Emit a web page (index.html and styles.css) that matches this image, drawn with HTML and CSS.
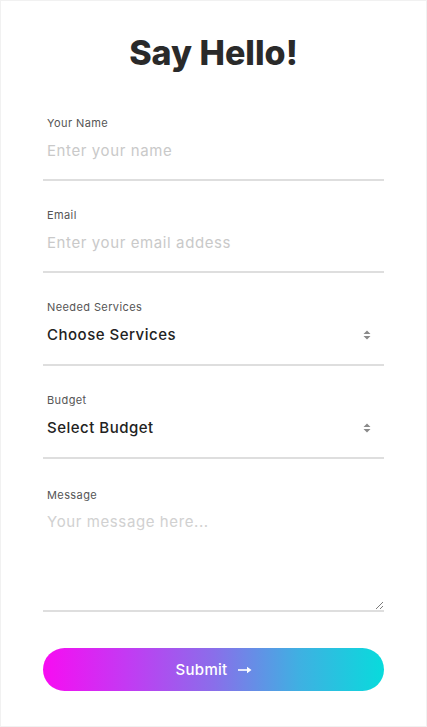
FILE: index.html
```html
<!DOCTYPE html>
<html lang="en">
<head>
<meta charset="utf-8">
<title>Say Hello!</title>
<link rel="stylesheet" href="styles.css">
</head>
<body>
<main class="page">
  <h1 class="title">Say Hello!</h1>
  <form class="form">
    <div class="field">
      <label class="label" for="name">Your Name</label>
      <input class="control" id="name" type="text" placeholder="Enter your name">
    </div>
    <div class="field">
      <label class="label" for="email">Email</label>
      <input class="control" id="email" type="email" placeholder="Enter your email addess">
    </div>
    <div class="field">
      <label class="label" for="services">Needed Services</label>
      <div class="select-wrap">
        <select class="control select" id="services">
          <option>Choose Services</option>
        </select>
        <svg class="arrows" width="8" height="10" viewBox="0 0 8 10"><path d="M4 0.5 L7.5 4 H0.5 Z M4 9.5 L7.5 6 H0.5 Z" fill="#8a8a8a"/></svg>
      </div>
    </div>
    <div class="field">
      <label class="label" for="budget">Budget</label>
      <div class="select-wrap">
        <select class="control select" id="budget">
          <option>Select Budget</option>
        </select>
        <svg class="arrows" width="8" height="10" viewBox="0 0 8 10"><path d="M4 0.5 L7.5 4 H0.5 Z M4 9.5 L7.5 6 H0.5 Z" fill="#8a8a8a"/></svg>
      </div>
    </div>
    <div class="field field-message">
      <label class="label" for="message">Message</label>
      <textarea class="control textarea" id="message" placeholder="Your message here..."></textarea>
    </div>
    <button class="submit" type="button">Submit <svg class="arrow" width="14" height="8" viewBox="0 0 14 8"><path d="M0 4 H12" stroke="#fff" stroke-width="1.6"/><path d="M9 0.8 L13.5 4 L9 7.2 Z" fill="#fff"/></svg></button>
  </form>
</main>
</body>
</html>
```
FILE: styles.css
```css
* { box-sizing: border-box; }
html, body { margin: 0; padding: 0; background: #fff; }
body { font-family: Inter, "Noto Sans", sans-serif; }
.page {
  min-height: 727px;
  border: 1px solid #f1f1f1;
  padding: 32px 42px 0;
}
.title {
  margin: 0;
  text-align: center;
  font-size: 34px;
  line-height: 40px;
  font-weight: 800;
  color: #2a2a2a;
  letter-spacing: 0;
}
.form {
  margin-top: 42px;
  display: flex;
  flex-direction: column;
  gap: 26px;
}
.field {
  display: flex;
  flex-direction: column;
  border-bottom: 2px solid #dedede;
}
.field-message { margin-top: 2px; }
.label {
  display: block;
  padding-left: 4px;
  font-size: 11px;
  line-height: 16px;
  color: #555;
  letter-spacing: 0.4px;
}
.control {
  display: block;
  width: 100%;
  border: 0;
  outline: 0;
  background: transparent;
  font-family: inherit;
  font-size: 15px;
  line-height: 22px;
  height: 48px;
  padding: 8px 4px 18px;
  margin: 0;
  color: #222;
  letter-spacing: 0.6px;
}
.control::placeholder { color: #c9c9c9; }
.select-wrap { position: relative; }
.select {
  -webkit-appearance: none;
  appearance: none;
  font-weight: 500;
  color: #222;
  height: 49px;
  letter-spacing: 0.5px;
}
.arrows {
  position: absolute;
  right: 13px;
  top: 15px;
  pointer-events: none;
}
.textarea {
  height: 107px;
  resize: vertical;
  opacity: 0.85;
}
.submit {
  margin-top: 10px;
  height: 43px;
  width: 100%;
  border: 0;
  border-radius: 22px;
  background: linear-gradient(90deg, #f80cf2 0%, #c23bf3 25%, #8a6eea 50%, #3fb0e2 75%, #08dbdc 100%);
  color: #fff;
  font-family: inherit;
  font-size: 15px;
  font-weight: 500;
  letter-spacing: 0.3px;
  display: flex;
  align-items: center;
  justify-content: center;
  gap: 10px;
}
.arrow { display: block; }
```
